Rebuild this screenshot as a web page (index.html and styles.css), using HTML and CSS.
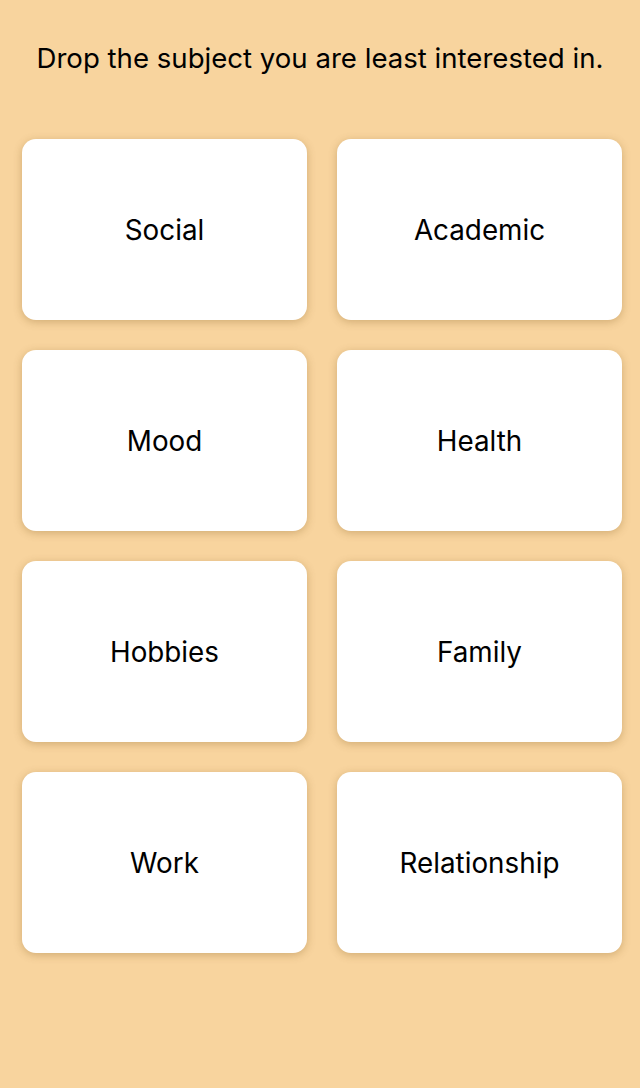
FILE: index.html
```html
<!DOCTYPE html>
<html lang="en">
<head>
<meta charset="utf-8">
<title>Drop a subject</title>
<link rel="stylesheet" href="styles.css">
</head>
<body>
<main class="screen">
  <h1 class="prompt">Drop the subject you are least interested in.</h1>
  <div class="grid">
    <button class="card">Social</button>
    <button class="card">Academic</button>
    <button class="card">Mood</button>
    <button class="card">Health</button>
    <button class="card">Hobbies</button>
    <button class="card">Family</button>
    <button class="card">Work</button>
    <button class="card">Relationship</button>
  </div>
</main>
</body>
</html>
```

FILE: styles.css
```css
html, body {
  margin: 0;
  padding: 0;
  background: #f8d49e;
}
body {
  font-family: Inter, "Noto Sans", "Liberation Sans", sans-serif;
  color: #000;
  width: 640px;
  height: 1088px;
  overflow: hidden;
}
.screen {
  display: flex;
  flex-direction: column;
  padding: 0 18px 0 22px;
}
.prompt {
  margin: 0 0 0 -4px;
  padding-top: 41px;
  height: 139px;
  box-sizing: border-box;
  font-size: 27.6px;
  font-weight: 400;
  line-height: 34px;
  text-align: center;
  white-space: nowrap;
}
.grid {
  display: grid;
  grid-template-columns: 285px 285px;
  grid-auto-rows: 181px;
  column-gap: 30px;
  row-gap: 30px;
}
.card {
  border: none;
  background: #fff;
  border-radius: 14px;
  box-shadow: 0 2px 8px rgba(120, 80, 20, 0.3);
  font-family: inherit;
  font-size: 27.8px;
  color: #000;
  display: flex;
  align-items: center;
  justify-content: center;
  padding: 0;
}
```
